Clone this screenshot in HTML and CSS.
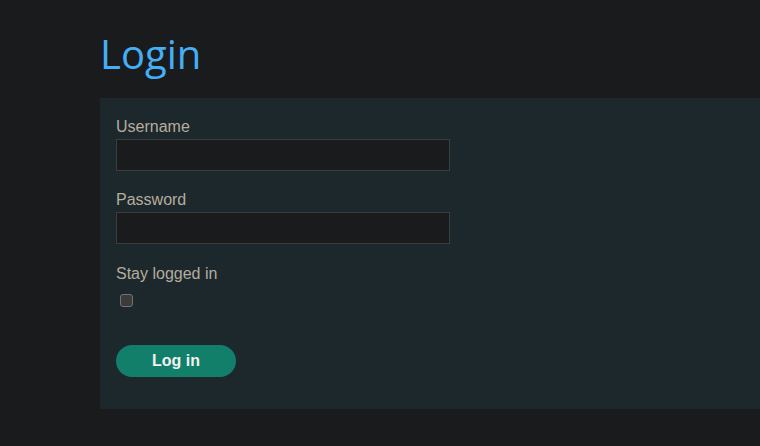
FILE: index.html
```html
<!DOCTYPE html>
<html>
<head>
<meta charset="utf-8">
<link rel="stylesheet" href="styles.css">
</head>
<body>
<main class="page">
  <h1 class="title">Login</h1>
  <form class="panel">
    <div class="field field-first">
      <label class="label" for="u">Username</label>
      <input class="input" id="u" type="text">
    </div>
    <div class="field field-second">
      <label class="label" for="p">Password</label>
      <input class="input" id="p" type="password">
    </div>
    <div class="field">
      <label class="label" for="s">Stay logged in</label>
      <span class="check"></span>
    </div>
    <button class="btn" type="button">Log in</button>
  </form>
</main>
</body>
</html>
```
FILE: styles.css
```css
html, body {
  margin: 0;
  padding: 0;
  background: #1a1b1d;
  overflow: hidden;
  height: 446px;
}
.page {
  padding-left: 100px;
  width: 760px;
  box-sizing: border-box;
}
.title {
  margin: 0;
  padding-top: 29px;
  height: 98px;
  box-sizing: border-box;
  font-family: "Open Sans", sans-serif;
  font-weight: 400;
  font-size: 40px;
  line-height: 50px;
  color: #45aff5;
}
.panel {
  background: #1d282c;
  width: 660px;
  height: 311px;
  box-sizing: border-box;
  padding: 19px 16px 0;
  display: flex;
  flex-direction: column;
}
.field {
  display: flex;
  flex-direction: column;
  margin-bottom: 19px;
}
.field-first {
  margin-bottom: 19px;
}
.field-second {
  margin-bottom: 20px;
}
.label {
  font-family: "Liberation Sans", Arial, sans-serif;
  font-size: 16px;
  line-height: 20px;
  color: #b5ad9f;
  margin-bottom: 2px;
}
.input {
  width: 334px;
  height: 32px;
  box-sizing: border-box;
  background: #1a1b1d;
  border: 1px solid #3b3e3f;
  margin: 0;
  padding: 0;
}
.check {
  width: 13px;
  height: 13px;
  box-sizing: border-box;
  margin: 8px 0 0 4px;
  background: #3b3b3b;
  border: 1px solid #737373;
  border-radius: 3px;
}
.btn {
  margin-top: 19px;
  width: 120px;
  height: 32px;
  border: none;
  border-radius: 16px;
  background: #117f69;
  color: #f2f2f2;
  font-family: "Liberation Sans", Arial, sans-serif;
  font-weight: 700;
  font-size: 16px;
  padding: 0;
}
```
